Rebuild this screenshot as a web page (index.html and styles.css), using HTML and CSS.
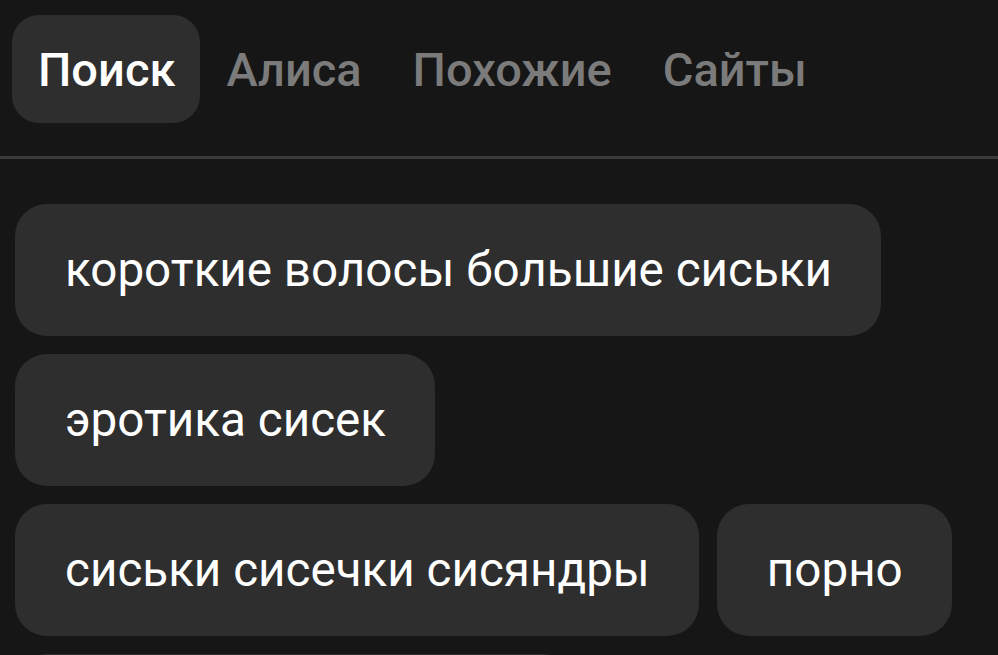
FILE: index.html
```html
<!DOCTYPE html>
<html lang="ru">
<head>
<meta charset="utf-8">
<link rel="stylesheet" href="styles.css">
</head>
<body>
<div class="page">
  <nav class="tabs">
    <div class="tab active">Поиск</div>
    <div class="tab">Алиса</div>
    <div class="tab">Похожие</div>
    <div class="tab">Сайты</div>
  </nav>
  <div class="divider"></div>
  <div class="chips">
    <div class="chip">короткие волосы большие сиськи</div>
    <div class="chip">эротика сисек</div>
    <div class="chip">сиськи сисечки сисяндры</div>
    <div class="chip">порно</div>
    <div class="chip chip-more"></div>
  </div>
</div>
</body>
</html>
```

FILE: styles.css
```css
html, body {
  margin: 0;
  padding: 0;
  background: #161616;
  overflow: hidden;
}
body {
  font-family: Roboto, "Noto Sans", sans-serif;
  color: #ffffff;
  width: 998px;
  height: 655px;
}
.page {
  display: flex;
  flex-direction: column;
}
.tabs {
  display: flex;
  padding: 15px 0 0 12px;
  height: 108px;
}
.tab {
  display: flex;
  align-items: center;
  padding: 0 25px 0 26px;
  height: 108px;
  border-radius: 27px;
  font-size: 47px;
  font-weight: 500;
  color: #7b7b7b;
  white-space: nowrap;
}
.tab.active {
  background: #2e2e2e;
  color: #ffffff;
}
.divider {
  margin-top: 33px;
  height: 3px;
  background: #3a3a3a;
}
.chips {
  display: flex;
  flex-wrap: wrap;
  gap: 18px;
  padding: 45px 0 0 15px;
}
.chip {
  display: flex;
  align-items: center;
  height: 132px;
  padding: 0 49px 0 50px;
  border-radius: 32px;
  background: #2e2e2e;
  font-size: 47.6px;
  font-weight: 400;
  color: #ffffff;
  white-space: nowrap;
}
.chip-more {
  width: 460px;
}
```
